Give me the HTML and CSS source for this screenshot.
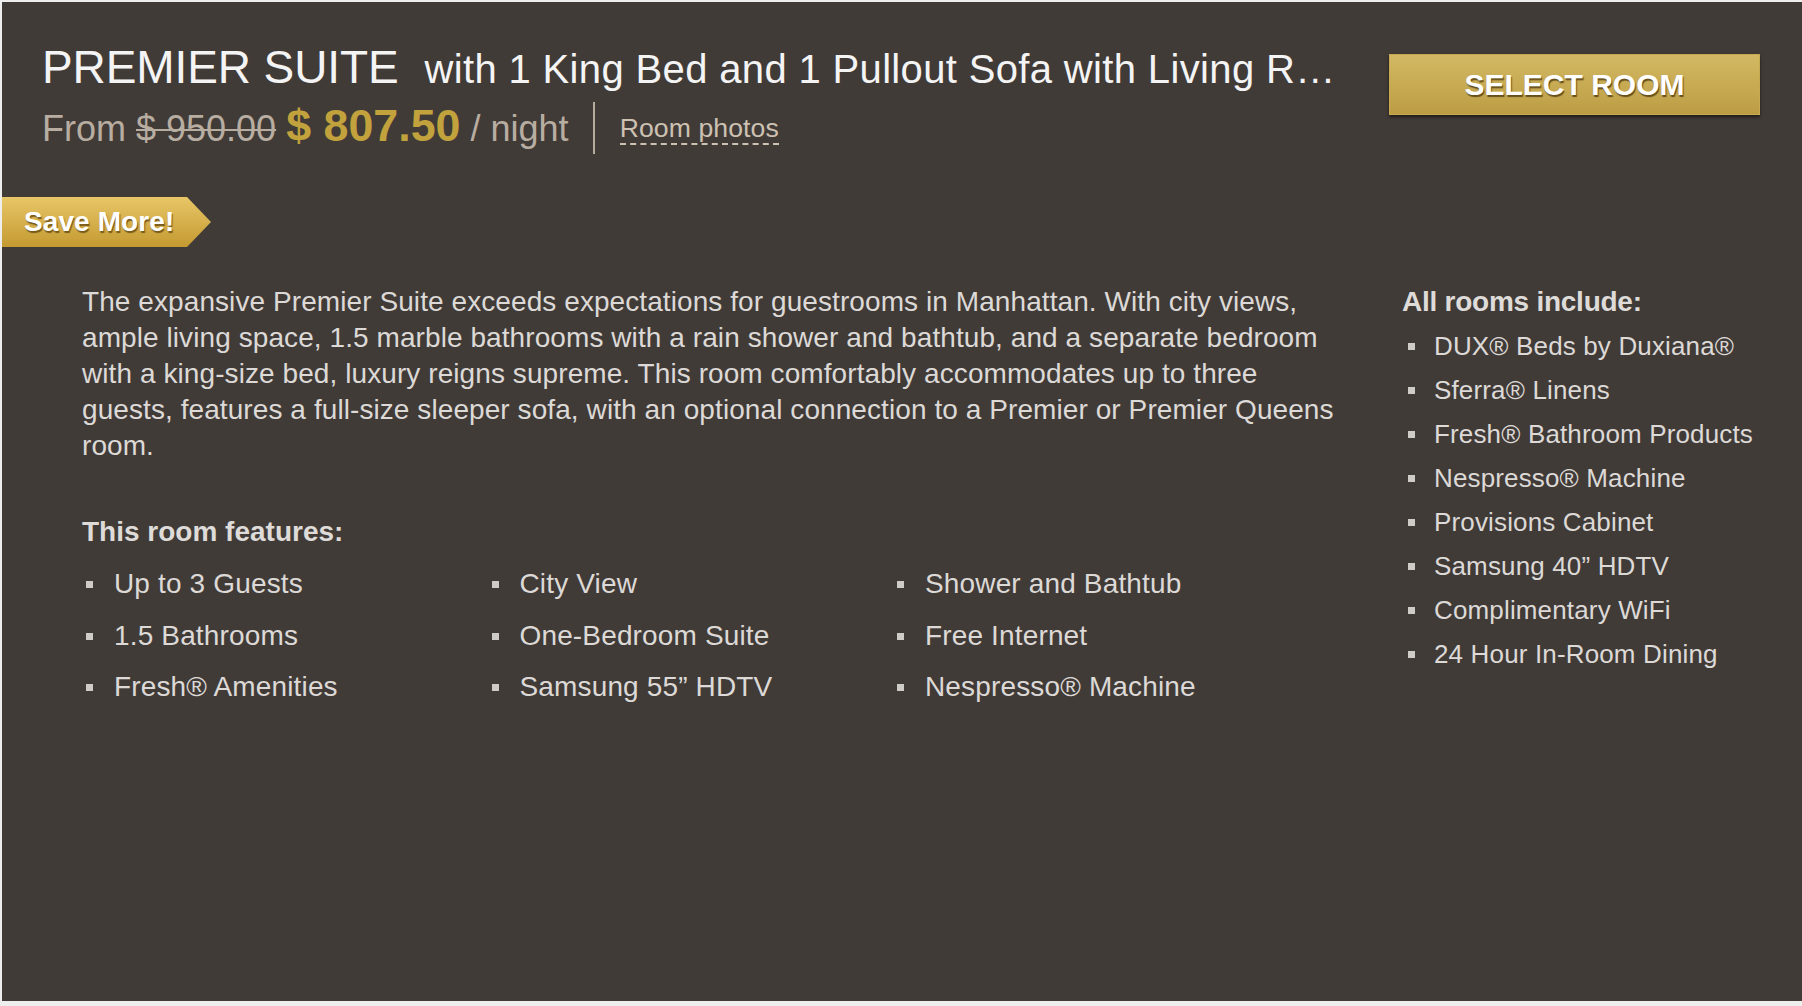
FILE: index.html
```html
<!DOCTYPE html>
<html lang="en">
<head>
<meta charset="utf-8">
<title>Premier Suite</title>
<link rel="stylesheet" href="styles.css">
</head>
<body>
<div class="panel">
  <header class="head">
    <div class="head-main">
      <h1 class="title"><span class="name">PREMIER SUITE</span><span class="sub">with 1 King Bed and 1 Pullout Sofa with Living R…</span></h1>
      <div class="price">From <span class="old">$ 950.00</span> <strong class="now">$ 807.50</strong> / night<span class="sep"></span><a class="photos" href="#">Room photos</a></div>
    </div>
    <button class="select">SELECT ROOM</button>
  </header>
  <div class="ribbon">Save More!</div>
  <div class="body">
    <div class="main-col">
      <p class="desc">The expansive Premier Suite exceeds expectations for guestrooms in Manhattan. With city views, ample living space, 1.5 marble bathrooms with a rain shower and bathtub, and a separate bedroom with a king-size bed, luxury reigns supreme. This room comfortably accommodates up to three guests, features a full-size sleeper sofa, with an optional connection to a Premier or Premier Queens room.</p>
      <h2 class="heading features-h">This room features:</h2>
      <ul class="features">
        <li>Up to 3 Guests</li>
        <li>City View</li>
        <li>Shower and Bathtub</li>
        <li>1.5 Bathrooms</li>
        <li>One-Bedroom Suite</li>
        <li>Free Internet</li>
        <li>Fresh® Amenities</li>
        <li>Samsung 55” HDTV</li>
        <li>Nespresso® Machine</li>
      </ul>
    </div>
    <aside class="side">
      <h2 class="heading side-h">All rooms include:</h2>
      <ul class="includes">
        <li>DUX® Beds by Duxiana®</li>
        <li>Sferra® Linens</li>
        <li>Fresh® Bathroom Products</li>
        <li>Nespresso® Machine</li>
        <li>Provisions Cabinet</li>
        <li>Samsung 40” HDTV</li>
        <li>Complimentary WiFi</li>
        <li>24 Hour In-Room Dining</li>
      </ul>
    </aside>
  </div>
</div>
</body>
</html>
```
FILE: styles.css
```css
* { box-sizing: border-box; }
html, body { margin: 0; padding: 0; }
body {
  background: #eeeeee;
  font-family: "Liberation Sans", Arial, Helvetica, sans-serif;
  height: 1006px;
  overflow: hidden;
}
.panel {
  margin: 2px 0 0 2px;
  height: 999px;
  background: #413b38;
  color: #dcd9d6;
}
.head {
  display: flex;
  justify-content: space-between;
  align-items: flex-start;
  padding: 39px 42px 0 40px;
}
.head-main {
  flex: 1;
  min-width: 0;
  margin-right: 40px;
}
.title {
  margin: 0;
  font-weight: normal;
  color: #f4f4f4;
  white-space: nowrap;
  overflow: hidden;
  line-height: 52px;
}
.name {
  font-size: 46px;
  letter-spacing: -0.1px;
}
.sub {
  font-size: 40px;
  margin-left: 26px;
  letter-spacing: 0.35px;
}
.price {
  margin-top: 2px;
  font-size: 36px;
  line-height: 50px;
  color: #b8ada1;
  white-space: nowrap;
}
.old {
  text-decoration: line-through;
  text-decoration-thickness: 2px;
}
.now {
  font-size: 44.8px;
  color: #c1a23c;
}
.sep {
  display: inline-block;
  width: 2px;
  height: 52px;
  background: #b5aa9c;
  vertical-align: -13px;
  margin-left: 24px;
  margin-right: 25px;
}
.photos {
  font-size: 26.6px;
  color: #cdc1b2;
  text-decoration: none;
  border-bottom: 2px dashed #cdc1b2;
  vertical-align: 4px;
  line-height: 1;
  letter-spacing: 0.1px;
}
.select {
  margin-top: 13px;
  width: 371px;
  height: 61px;
  border: 1px solid #c7a950;
  background: linear-gradient(#d3b963, #bc9d44);
  box-shadow: 0 2px 3px rgba(0, 0, 0, 0.55);
  color: #ffffff;
  font-family: "Liberation Sans", Arial, sans-serif;
  font-weight: bold;
  font-size: 30px;
  letter-spacing: 0;
  text-shadow: 1px 2px 1px rgba(70, 50, 10, 0.75);
  padding: 0;
  cursor: pointer;
}
.ribbon {
  margin-top: 43px;
  width: 209px;
  height: 50px;
  padding-left: 22px;
  background: linear-gradient(#e8c667, #c49a31);
  clip-path: polygon(0 0, calc(100% - 24px) 0, 100% 50%, calc(100% - 24px) 100%, 0 100%);
  color: #ffffff;
  font-weight: bold;
  font-size: 28px;
  line-height: 50px;
  letter-spacing: 0.1px;
  text-shadow: 1px 2px 1px rgba(80, 55, 10, 0.7);
}
.body {
  display: grid;
  grid-template-columns: 1270px 1fr;
  column-gap: 50px;
  padding-left: 80px;
  margin-top: 37px;
}
.desc {
  margin: 0;
  font-size: 28px;
  line-height: 36px;
  letter-spacing: 0.08px;
}
.heading {
  margin: 0;
  font-size: 28px;
  line-height: 36px;
  font-weight: bold;
  letter-spacing: 0;
  color: #dedbd8;
}
.side-h {
  letter-spacing: -0.25px;
}
.features-h {
  margin-top: 50px;
}
ul {
  list-style: none;
  margin: 0;
  padding: 0;
}
.features {
  margin-top: 16px;
  padding-left: 4px;
  display: grid;
  grid-template-columns: repeat(3, 405.5px);
  row-gap: 15.5px;
  font-size: 28px;
  line-height: 36px;
  letter-spacing: 0.15px;
}
.features li::before {
  content: "";
  display: inline-block;
  width: 7px;
  height: 7px;
  background: #cfcbc7;
  vertical-align: 5px;
  margin-right: 21px;
}
.includes {
  margin-top: 4px;
  padding-left: 6px;
  font-size: 26px;
  line-height: 44px;
  letter-spacing: 0.15px;
}
.includes li {
  white-space: nowrap;
}
.includes li::before {
  content: "";
  display: inline-block;
  width: 7px;
  height: 7px;
  background: #cfcbc7;
  vertical-align: 5px;
  margin-right: 19px;
}
```
